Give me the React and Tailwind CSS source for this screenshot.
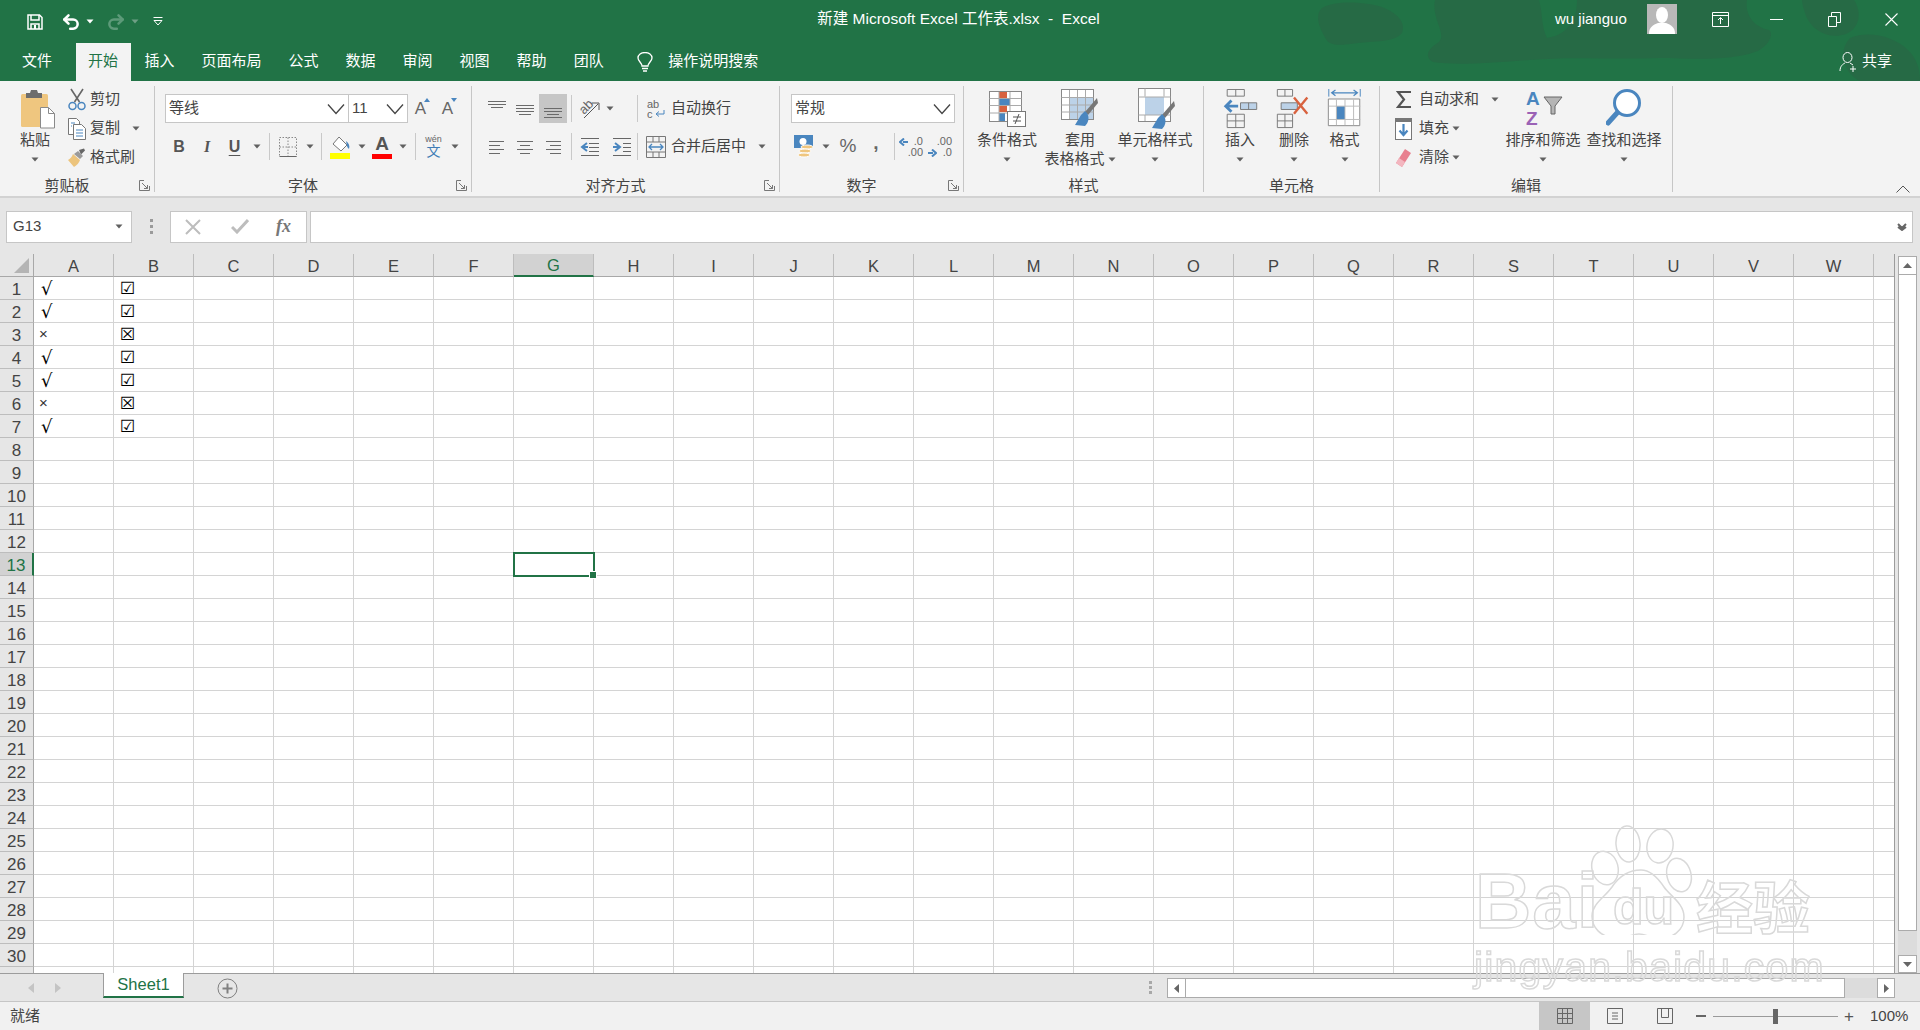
import { Undo2, Redo2 } from 'lucide-react'

const COLS = 'ABCDEFGHIJKLMNOPQRSTUVW'.split('')
const ROWS = Array.from({ length: 31 }, (_, i) => i + 1)
const MARKS = { 1: '√', 2: '√', 3: '×', 4: '√', 5: '√', 6: '×', 7: '√' }

function Caret({ className = '', color = '#606060' }) {
  return (
    <svg width="8" height="5" viewBox="0 0 8 5" className={`shrink-0 ${className}`}>
      <path d="M0.5 0.5h7L4 4.5z" fill={color} />
    </svg>
  )
}

function Chevron() {
  return (
    <svg width="18" height="12" viewBox="0 0 18 12" fill="none" stroke="#444" strokeWidth="1.3">
      <path d="M1 1.5l8 9 8-9" />
    </svg>
  )
}

function Launcher() {
  return (
    <svg width="11" height="11" viewBox="0 0 11 11" fill="none" stroke="#777" className="absolute right-[4px] bottom-[1px]">
      <path d="M5 .5H.5v10h10V6M3 3l5.5 5.5M8.5 5v3.5H5" />
    </svg>
  )
}

function Group({ className, label, launcher, children }) {
  return (
    <div className={`relative flex flex-col h-[106px] border-r border-[#c6c6c6] shrink-0 ${className}`}>
      <div className="flex h-[90px]">{children}</div>
      <div className={`h-[16px] leading-[20px] text-center text-[15px] text-[#444] ${launcher ? 'pr-[20px]' : ''}`}>{label}</div>
      {launcher && <Launcher />}
    </div>
  )
}

function Cell({ className, children }) {
  return <div className={`flex items-center justify-center h-full shrink-0 ${className}`}>{children}</div>
}

function Sep() {
  return <div className="w-px h-[27px] bg-[#c9c9c9] shrink-0" />
}

function Combo({ className, text }) {
  return (
    <div className={`flex items-center justify-between h-[29px] bg-white border border-[#c6c6c6] pl-[3px] pr-[3px] text-[15px] text-[#444] shrink-0 ${className}`}>
      <span>{text}</span>
      <Chevron />
    </div>
  )
}

function LargeBtn({ className, icon, iconClass = '', lines }) {
  return (
    <div className={`flex flex-col items-center pt-[2px] shrink-0 text-[15px] text-[#444] whitespace-nowrap ${className}`}>
      <div className={`h-[41px] flex items-center justify-center ${iconClass}`}>{icon}</div>
      <div className="leading-[20px] h-[20px] pt-[1px]">{lines[0]}</div>
      {lines[1] ? (
        <div className="leading-[20px] h-[20px] flex items-center gap-[3px]">
          {lines[1]}
          <Caret />
        </div>
      ) : (
        <div className="h-[20px] flex items-center"><Caret /></div>
      )}
    </div>
  )
}

/* ---- icons ---- */
const BLUE = '#4a86bf'
const LBLUE = '#bcd2e8'

const PasteIcon = (
  <svg width="36" height="40" viewBox="0 0 36 40">
    <rect x="0" y="5" width="27" height="33" rx="1.5" fill="#efc67f" />
    <path d="M5 4h4l1-3h6l1 3h4v5H5z" fill="#6d6d6d" />
    <path d="M19.5 18.5h8l6 6v14.500h-14z" fill="#fff" stroke="#8a8a8a" />
    <path d="M27.500 18.500v6h6" fill="none" stroke="#8a8a8a" />
  </svg>
)
const ScissorsIcon = (
  <svg width="18" height="23" viewBox="0 0 18 23" fill="none">
    <path d="M3 1l8.500 13M15 1L6.500 14" stroke="#666" strokeWidth="1.6" />
    <circle cx="4.500" cy="18" r="3.500" stroke={BLUE} strokeWidth="1.500" />
    <circle cx="13.500" cy="18" r="3.500" stroke={BLUE} strokeWidth="1.500" />
  </svg>
)
const CopyIcon = (
  <svg width="18" height="22" viewBox="0 0 18 22" fill="#fff" stroke="#777">
    <path d="M.5.500h8l3 3v13H.5z" />
    <path d="M5.500 6.500h8l4 4v11h-12z" />
    <path d="M3 5h4M3 8h1M8 12h7M8 15h7M8 18h7" stroke={BLUE} />
  </svg>
)
const BrushIcon = (
  <svg width="18" height="20" viewBox="0 0 18 20">
    <path d="M11 2l5-1.500 1 2-4 4z" fill="#666" />
    <path d="M10 3l5 5-3 3-6-5z" fill="#9a9a9a" />
    <path d="M5 6l7 6c-1 3-3 5-6 7L0 12c2-1 4-3 5-6z" fill="#ecc47d" />
  </svg>
)
const Bold = <span className="font-bold text-[16px] text-[#555]">B</span>
const Italic = <span className="italic font-bold text-[16px] text-[#555] font-['Liberation_Serif',serif]">I</span>
const Under = <span className="font-bold text-[16px] text-[#555] underline underline-offset-[3px]">U</span>
const BorderIcon = (
  <svg width="18" height="20" viewBox="0 0 18 20" fill="none" stroke="#888" strokeDasharray="1.500 1.500">
    <path d="M.5.500h17v19H.5zM9 .5v19M.5 10h17" />
    <path d="M.5 19.500h17" strokeDasharray="none" stroke="#666" />
  </svg>
)
const FillIcon = (
  <svg width="21" height="24" viewBox="0 0 21 24">
    <path d="M9 2l8 8-6 6-8-7z" fill="#fff" stroke="#777" />
    <path d="M16 6c3 2 4 5 3 8-1-1-2-2-2-3z" fill={BLUE} />
    <rect x="0" y="18" width="20" height="6" fill="#ffff00" />
  </svg>
)
const FontColorIcon = (
  <div className="flex flex-col items-center">
    <span className="text-[19px] leading-[20px] font-bold text-[#555] font-['Liberation_Sans',sans-serif]">A</span>
    <div className="w-[20px] h-[5px] bg-[#ff0000]" />
  </div>
)
const PhoneticIcon = (
  <div className="flex flex-col items-center leading-none">
    <span className="text-[9px] leading-[9px] text-[#666]">wén</span>
    <span className="text-[14px] leading-[14px] text-[#3f7cb5]">文</span>
  </div>
)
function GrowA({ shrink }) {
  return (
    <div className="relative text-[17px] leading-[20px] text-[#666] pr-[2px]">
      A
      <svg width="6" height="4" viewBox="0 0 6 4" className="absolute right-[-2px] top-[-1px]">
        <path d={shrink ? 'M0 0h6L3 4z' : 'M3 0l3 4H0z'} fill={BLUE} />
      </svg>
    </div>
  )
}
function Lines({ spec }) {
  return (
    <svg width="20" height="20" viewBox="0 0 20 20" stroke="#6a6a6a" strokeWidth="1">
      {spec.map((s, i) => <line key={i} x1={s[0]} x2={s[1]} y1={s[2] + 0.5} y2={s[2] + 0.5} />)}
    </svg>
  )
}
const AlignTop = <Lines spec={[[1, 19, 2], [1, 19, 5], [4, 16, 8]]} />
const AlignMid = <Lines spec={[[1, 19, 6], [1, 19, 9], [1, 19, 12], [4, 16, 15]]} />
const AlignBot = <Lines spec={[[1, 19, 9], [1, 19, 12], [4, 16, 15], [1, 19, 18]]} />
const AlignL = <Lines spec={[[2, 17, 4], [2, 13, 8], [2, 17, 12], [2, 13, 16]]} />
const AlignC = <Lines spec={[[2, 18, 4], [5, 15, 8], [2, 18, 12], [5, 15, 16]]} />
const AlignR = <Lines spec={[[3, 18, 4], [7, 18, 8], [3, 18, 12], [7, 18, 16]]} />
const OrientIcon = (
  <div className="relative w-[22px] h-[22px]">
    <span className="absolute left-0 top-[1px] -rotate-45 text-[13px] leading-[16px] text-[#666]">ab</span>
    <svg width="22" height="22" viewBox="0 0 22 22" className="absolute inset-0" fill="none" stroke="#555">
      <path d="M5 20L19 6M13 5h7v7" />
    </svg>
  </div>
)
const Outdent = (
  <svg width="20" height="20" viewBox="0 0 20 20" fill="none">
    <path d="M1 1.500h18M9 6.500h10M9 10.500h10M9 14.500h10M1 18.500h18" stroke="#666" />
    <path d="M7 6L2 10l5 4M2 10h6" stroke={BLUE} strokeWidth="2" />
  </svg>
)
const Indent = (
  <svg width="20" height="20" viewBox="0 0 20 20" fill="none">
    <path d="M1 1.500h18M11 6.500h8M11 10.500h8M11 14.500h8M1 18.500h18" stroke="#666" />
    <path d="M3 6l5 4-5 4M1 10h6" stroke={BLUE} strokeWidth="2" />
  </svg>
)
const WrapIcon = (
  <div className="relative w-[18px] h-[20px] text-[#666] text-[11px] leading-[10px] font-['Liberation_Sans',sans-serif]">
    <div>ab</div>
    <div>c</div>
    <svg width="10" height="8" viewBox="0 0 10 8" fill="none" stroke={BLUE} className="absolute right-0 bottom-[1px]">
      <path d="M9 0v4H2M4 1.500L1 4l3 2.500" />
    </svg>
  </div>
)
const MergeIcon = (
  <svg width="20" height="22" viewBox="0 0 20 22" fill="none" stroke="#777">
    <path d="M.5.500h19v21H.5zM.5 6h19M.5 16h19M7 .5V6M13 .5V6M7 16v5.500M13 16v5.500" />
    <path d="M3 11h14M6 8l-3 3 3 3M14 8l3 3-3 3" stroke={BLUE} strokeWidth="1.300" />
  </svg>
)
const CurrencyIcon = (
  <svg width="20" height="24" viewBox="0 0 20 24">
    <rect x="0" y="0" width="19" height="13" fill={BLUE} />
    <circle cx="9" cy="6.500" r="3.500" fill="#fff" />
    <ellipse cx="13" cy="12" rx="6" ry="2" fill="#efc67f" stroke="#fff" />
    <ellipse cx="11" cy="16" rx="6" ry="2" fill="#efc67f" stroke="#fff" />
    <ellipse cx="10" cy="20" rx="6" ry="2" fill="#efc67f" stroke="#fff" />
  </svg>
)
function DecIcon({ top, bottom, right }) {
  return (
    <div className="relative w-[24px] h-[22px] text-[11px] leading-[11px] text-[#666] text-right font-['Liberation_Sans',sans-serif]">
      <div>{top}</div>
      <div>{bottom}</div>
      <svg width="9" height="8" viewBox="0 0 9 8" className={`absolute ${right ? 'left-0 top-[13px]' : 'left-0 top-[2px]'}`}>
        <path d={right ? 'M0 4h5M4 .5L8 4 4 7.500' : 'M9 4H4M5 .5L1 4l4 3.500'} stroke={BLUE} strokeWidth="2" fill="none" />
      </svg>
    </div>
  )
}
const CondIcon = (
  <svg width="38" height="36" viewBox="0 0 38 36">
    <rect x=".5" y=".5" width="32" height="30" fill="#fff" stroke="#888" />
    <rect x="10" y="1" width="8" height="6" fill="#d8623f" />
    <rect x="10" y="7" width="11" height="7" fill={BLUE} />
    <rect x="10" y="15" width="8" height="6" fill="#d8623f" />
    <rect x="10" y="22" width="6" height="8" fill={BLUE} />
    <path d="M.5 7.500h32M.5 14.500h32M.5 22h32M10 1v29M21 1v29" stroke="#aaa" fill="none" />
    <rect x="18.500" y="20.500" width="18" height="15" fill="#fff" stroke="#777" />
    <path d="M24 26h8M24 30h8M30 23l-4 10" stroke="#555" fill="none" />
  </svg>
)
const TableIcon = (
  <svg width="38" height="40" viewBox="0 0 38 40">
    <rect x=".5" y=".5" width="32" height="30" fill="#fff" stroke="#888" />
    <rect x="8" y="9" width="24" height="21" fill={LBLUE} />
    <path d="M.5 8.500h32M.5 16h32M.5 23h32M8.500 1v29M16.500 1v29M24.500 1v29" stroke="#aaa" fill="none" />
    <path d="M36 9l1 5-10 12-3-3z" fill="#777" />
    <path d="M26 24l-2-2-4 4-6 10 10 1c3-3 5-8 2-13z" fill={BLUE} />
  </svg>
)
const CellStyleIcon = (
  <svg width="38" height="42" viewBox="0 0 38 42">
    <rect x=".5" y=".5" width="32" height="33" fill="#fff" stroke="#888" />
    <rect x="7" y="9" width="19" height="18" fill={LBLUE} />
    <path d="M7 .5v8M26 .5v8M.5 9h32M.5 27h32M7 27v6M26 27v6" stroke="#aaa" fill="none" />
    <path d="M36 13l1 5-10 12-3-3z" fill="#777" />
    <path d="M26 28l-2-2-4 4-6 10 10 1c3-3 5-8 2-13z" fill={BLUE} />
  </svg>
)
const InsertIcon = (
  <svg width="36" height="40" viewBox="0 0 36 42" fill="none" stroke="#777">
    <path d="M3.500.5h18v7h-18zM12.500.5v7M3.500 26.500h18v14h-18zM12.500 26.500v14M3.500 33.500h18" />
    <path d="M17.500 14.500h17v7h-17zM26 14.500v7" fill={LBLUE} />
    <path d="M15 18H3M8 12l-6 6 6 6" stroke={BLUE} strokeWidth="3" />
  </svg>
)
const DeleteIcon = (
  <svg width="36" height="40" viewBox="0 0 36 42" fill="none" stroke="#777">
    <path d="M.5.500h16v7H.5zM8.500.5v7M.5 26.500h16v14H.5zM8.500 26.500v14M.5 33.500h16" />
    <path d="M4.500 14.500h17v7h-17z" fill={LBLUE} />
    <path d="M18 9l14 17M32 9L18 26" stroke="#d8623f" strokeWidth="2.500" />
  </svg>
)
const FormatIcon = (
  <svg width="36" height="40" viewBox="0 0 36 42" fill="none">
    <path d="M1 0v8M34 0v8" stroke={BLUE} />
    <path d="M4 4h27M8 1L4 4l4 3M27 1l4 3-4 3" stroke={BLUE} strokeWidth="1.300" />
    <path d="M.5 10.500h33v28h-33z" fill="#fff" stroke="#888" />
    <rect x="9" y="18" width="9" height="14" fill={BLUE} />
    <path d="M9 11v27M18 11v27M27 11v27M1 18h33M1 32h33" stroke="#bbb" />
  </svg>
)
const SigmaIcon = (
  <svg width="16" height="19" viewBox="0 0 16 19" fill="none" stroke="#555" strokeWidth="2.200">
    <path d="M15 2H2l6 7.500L2 17h13" />
  </svg>
)
const DownFillIcon = (
  <svg width="17" height="22" viewBox="0 0 17 22" fill="none">
    <rect x=".5" y=".5" width="16" height="21" fill="#fff" stroke="#777" />
    <rect x="0" y="0" width="17" height="4" fill="#777" />
    <path d="M8.500 6v11M4.500 12.500l4 4.500 4-4.500" stroke={BLUE} strokeWidth="2.200" />
  </svg>
)
const EraserIcon = (
  <svg width="17" height="20" viewBox="0 0 17 20">
    <path d="M10 1l6 4-9 14-6-4z" fill="#e8808f" />
    <path d="M1 15l3-5 6 4-3 5z" fill="#f3b6bf" />
  </svg>
)
const SortIcon = (
  <div className="relative w-[36px] h-[40px] font-bold text-[19px] leading-[20px] font-['Liberation_Sans',sans-serif]">
    <div className="text-[#4a86bf] pl-[1px]">A</div>
    <div className="text-[#9a62b5] pl-[1px]">Z</div>
    <svg width="20" height="20" viewBox="0 0 20 20" className="absolute right-[-2px] top-[7px]">
      <path d="M1 1h18l-7 9v8H8v-8z" fill="#b5b5b5" stroke="#666" />
    </svg>
  </div>
)
const FindIcon = (
  <svg width="36" height="42" viewBox="0 0 36 42" fill="none">
    <circle cx="21" cy="15" r="12.500" stroke={BLUE} strokeWidth="3" fill="#fff" />
    <path d="M11 25L2 35" stroke={BLUE} strokeWidth="5" strokeLinecap="round" />
  </svg>
)

function SmallRow({ iconClass, icon, text, caretClass }) {
  return (
    <div className="flex items-center h-[29px] text-[15px] text-[#444] whitespace-nowrap">
      <div className={`flex items-center justify-center shrink-0 ${iconClass}`}>{icon}</div>
      <span>{text}</span>
      {caretClass && <Caret className={caretClass} />}
    </div>
  )
}

function TitleBlobs() {
  return (
    <svg width="620" height="81" viewBox="1300 0 620 81" fill="#266a45" className="absolute right-0 top-0 pointer-events-none">
      <path d="M1322 8c14-8 42-6 60-1 16 6 24 16 20 26-8 10-30 8-44 10-16 2-28 4-32-4-6-10-12-24-4-31z" />
      <path d="M1435 0h104c4 14 2 26 8 38 24-4 30-22 30-38h170c-2 12 4 26 22 30 6 4-2 18-14 22-30 10-66 6-96 6-50 2-84-2-130 2-30 2-72 6-96 2-10-6-4-14 6-20 8-8-8-24-4-42z" />
      <path d="M1802 0h52c8 12 6 28-8 34-18 6-34-4-40-18-2-6-4-12-4-16z" />
      <path d="M1850 38c18-8 44-2 58 12 8 8 12 18 12 31h-60c-14-6-24-28-10-43z" />
    </svg>
  )
}

function TitleBar() {
  return (
    <div className="relative flex items-center h-[43px] text-white">
      <TitleBlobs />
      <div className="relative flex items-center pl-[27px] w-[200px]">
        <svg width="16" height="16" viewBox="0 0 16 16" fill="none" stroke="#fff" strokeWidth="1.500">
          <path d="M1 1h11.500L15 3.500V15H1z" />
          <path d="M4 1v5h8V1M4 15v-5h8v5" />
          <path d="M8 11v4" strokeWidth="2" />
        </svg>
        <Undo2 size={20} strokeWidth={3} className="ml-[18px]" />
        <Caret className="ml-[5px]" color="#fff" />
        <Redo2 size={20} strokeWidth={3} color="#5d9a79" className="ml-[12px]" />
        <Caret className="ml-[5px]" color="#6f9f85" />
        <svg width="10" height="9" viewBox="0 0 10 9" fill="none" stroke="#fff" className="ml-[14px]">
          <path d="M.5.500h9M1 3.500h8L5 8z" />
        </svg>
      </div>
      <div className="relative flex-1 text-center text-[15.500px] pl-[162px] pb-[6px] whitespace-pre">新建 Microsoft Excel 工作表.xlsx  -  Excel</div>
      <div className="relative flex items-center w-[365px] shrink-0 pb-[5px] text-[15px]">
        <span className="w-[92px]">wu jianguo</span>
        <div className="flex items-end justify-center w-[30px] h-[30px] bg-[#b8b8b8] overflow-hidden">
          <svg width="26" height="28" viewBox="0 0 26 28" fill="#fff">
            <ellipse cx="13" cy="9" rx="6" ry="8" />
            <path d="M0 28c0-7 4-9 9-11h8c5 2 9 4 9 11z" />
          </svg>
        </div>
        <svg width="17" height="15" viewBox="0 0 17 15" fill="none" stroke="#fff" className="ml-[35px]">
          <path d="M.5.500h16v14H.5zM.5 3.500h16M8.500 12V6M6 8l2.500-2.500L11 8" />
        </svg>
        <div className="w-[13px] h-px bg-white ml-[41px]" />
        <svg width="13" height="15" viewBox="0 0 13 15" fill="none" stroke="#fff" className="ml-[45px]">
          <path d="M.5 4.500h8v10h-8zM3.500 4V.5h9v10H9" />
        </svg>
        <svg width="13" height="13" viewBox="0 0 13 13" stroke="#fff" strokeWidth="1.100" className="ml-[44px]">
          <path d="M.5.500l12 12M12.500.5l-12 12" />
        </svg>
      </div>
    </div>
  )
}

function TabRow() {
  const tabs = ['插入', '页面布局', '公式', '数据', '审阅', '视图', '帮助', '团队']
  return (
    <div className="relative flex items-stretch h-[38px] pl-[22px] text-white text-[15px] whitespace-nowrap">
      <div className="flex items-center mr-[24px] pb-[1px]">文件</div>
      <div className="flex items-center px-[12px] w-[55px] pb-[1px] bg-[#f3f3f3] text-[#217346]">开始</div>
      {tabs.map(t => (
        <div key={t} className="flex items-center px-[13px] mx-[0.5px] pb-[1px]">{t}</div>
      ))}
      <div className="flex items-center ml-[20px] pb-[1px]">
        <svg width="16" height="20" viewBox="0 0 16 20" fill="none" stroke="#fff" strokeWidth="1.300">
          <path d="M5 14c0-3-4-5-4-8a7 5.500 0 0 1 14 0c0 3-4 5-4 8z" />
          <path d="M5 16.500h6M6 19h4" />
        </svg>
        <span className="ml-[15px]">操作说明搜索</span>
      </div>
      <div className="relative ml-auto flex items-center pr-[28px] pb-[1px]">
        <svg width="19" height="20" viewBox="0 0 19 20" fill="none" stroke="#fff" className="mr-[4px]">
          <ellipse cx="8.500" cy="5.500" rx="4.500" ry="5" />
          <path d="M1 19c0-5 3-7 5-8M11 11l3 2M14 14v6M11 17h6" />
        </svg>
        共享
      </div>
    </div>
  )
}

function Ribbon() {
  return (
    <div className="relative flex items-start h-[117px] bg-[#f3f3f3] border-b-2 border-[#d2d2d2] pt-[5px]">
      <Group className="w-[155px]" label="剪贴板" launcher>
        <LargeBtn className="ml-[7px] w-[56px]" iconClass="pl-[8px]" icon={PasteIcon} lines={['粘贴']} />
        <div className="flex flex-col -mt-[1px]">
          <SmallRow iconClass="w-[27px]" icon={ScissorsIcon} text="剪切" />
          <SmallRow iconClass="w-[27px]" icon={CopyIcon} text="复制" caretClass="ml-[12px]" />
          <SmallRow iconClass="w-[27px]" icon={BrushIcon} text="格式刷" />
        </div>
      </Group>

      <Group className="w-[317px]" label="字体" launcher>
        <div className="flex flex-col pl-[10px] pt-[8px] gap-[9px]">
          <div className="flex h-[29px] items-center">
            <Combo className="w-[184px]" text="等线" />
            <Combo className="w-[60px] -ml-px" text="11" />
            <Cell className="w-[27px]"><GrowA /></Cell>
            <Cell className="w-[27px]"><GrowA shrink /></Cell>
          </div>
          <div className="flex h-[29px] items-center">
            <Cell className="w-[28px]">{Bold}</Cell>
            <Cell className="w-[28px]">{Italic}</Cell>
            <Cell className="w-[27px]">{Under}</Cell>
            <Cell className="w-[18px]"><Caret /></Cell>
            <Cell className="w-[3px]" />
            <Sep />
            <Cell className="w-[35px]">{BorderIcon}</Cell>
            <Cell className="w-[10px]"><Caret /></Cell>
            <Cell className="w-[6px]" />
            <Sep />
            <Cell className="w-[36px]">{FillIcon}</Cell>
            <Cell className="w-[8px]"><Caret /></Cell>
            <Cell className="w-[4px]" />
            <Cell className="w-[24px]">{FontColorIcon}</Cell>
            <Cell className="w-[18px]"><Caret /></Cell>
            <Cell className="w-[3px]" />
            <Sep />
            <Cell className="w-[35px]">{PhoneticIcon}</Cell>
            <Cell className="w-[8px]"><Caret /></Cell>
          </div>
        </div>
      </Group>

      <Group className="w-[308px]" label="对齐方式" launcher>
        <div className="flex flex-col pl-[11px] pt-[8px] gap-[9px] w-[165px] shrink-0">
          <div className="flex h-[29px] items-center">
            <Cell className="w-[28px]">{AlignTop}</Cell>
            <Cell className="w-[28px]">{AlignMid}</Cell>
            <Cell className="w-[28px] bg-[#c6c6c6]">{AlignBot}</Cell>
            <Cell className="w-[4px]" />
            <Sep />
            <Cell className="w-[36px]">{OrientIcon}</Cell>
            <Cell className="w-[3px]"><Caret /></Cell>
          </div>
          <div className="flex h-[29px] items-center">
            <Cell className="w-[28px]">{AlignL}</Cell>
            <Cell className="w-[28px]">{AlignC}</Cell>
            <Cell className="w-[28px]">{AlignR}</Cell>
            <Cell className="w-[4px]" />
            <Sep />
            <Cell className="w-[36px]">{Outdent}</Cell>
            <Cell className="w-[27px]">{Indent}</Cell>
          </div>
        </div>
        <div className="flex flex-col gap-[11px] pt-[9px] shrink-0">
          <Sep />
          <Sep />
        </div>
        <div className="flex flex-col gap-[9px] pt-[8px] h-[78px] shrink-0">
          <SmallRow iconClass="w-[33px] pl-[3px]" icon={WrapIcon} text="自动换行" />
          <SmallRow iconClass="w-[33px] pl-[3px]" icon={MergeIcon} text="合并后居中" caretClass="ml-[12px]" />
        </div>
      </Group>

      <Group className="w-[184px]" label="数字" launcher>
        <div className="flex flex-col pl-[11px] pt-[8px] gap-[9px]">
          <Combo className="w-[164px]" text="常规" />
          <div className="flex h-[29px] items-center">
            <Cell className="w-[26px]">{CurrencyIcon}</Cell>
            <Cell className="w-[18px]"><Caret /></Cell>
            <Cell className="w-[26px]"><span className="text-[19px] text-[#666]">%</span></Cell>
            <Cell className="w-[30px]"><span className="text-[19px] font-bold text-[#666] pb-[6px]">,</span></Cell>
            <Cell className="w-[3px]" />
            <Sep />
            <Cell className="w-[32px]"><DecIcon top=".0" bottom=".00" /></Cell>
            <Cell className="w-[26px]"><DecIcon top=".00" bottom=".0" right /></Cell>
          </div>
        </div>
      </Group>

      <Group className="w-[240px]" label="样式">
        <LargeBtn className="ml-[4px] w-[78px]" iconClass="pl-[2px]" icon={CondIcon} lines={['条件格式']} />
        <LargeBtn className="w-[68px]" icon={TableIcon} lines={['套用', '表格格式']} />
        <LargeBtn className="w-[82px]" iconClass="pl-[3px]" icon={CellStyleIcon} lines={['单元格样式']} />
      </Group>

      <Group className="w-[176px]" label="单元格">
        <LargeBtn className="w-[72px]" iconClass="pl-[2px]" icon={InsertIcon} lines={['插入']} />
        <LargeBtn className="w-[36px]" icon={DeleteIcon} lines={['删除']} />
        <LargeBtn className="w-[65px]" icon={FormatIcon} lines={['格式']} />
      </Group>

      <Group className="w-[293px]" label="编辑">
        <div className="flex flex-col w-[120px] shrink-0 -mt-[1px]">
          <SmallRow iconClass="w-[31px] ml-[8px]" icon={SigmaIcon} text="自动求和" caretClass="ml-[12px]" />
          <SmallRow iconClass="w-[31px] ml-[8px]" icon={DownFillIcon} text="填充" caretClass="ml-[3px]" />
          <SmallRow iconClass="w-[31px] ml-[8px]" icon={EraserIcon} text="清除" caretClass="ml-[3px]" />
        </div>
        <LargeBtn className="w-[86px]" icon={SortIcon} lines={['排序和筛选']} />
        <LargeBtn className="w-[76px]" icon={FindIcon} lines={['查找和选择']} />
      </Group>

      <svg width="14" height="8" viewBox="0 0 14 8" fill="none" stroke="#555" className="absolute right-[10px] bottom-[3px]">
        <path d="M.5 7.500L7 1l6.500 6.500" />
      </svg>
    </div>
  )
}

function FormulaBar() {
  return (
    <div className="flex items-center h-[56px] bg-[#e6e6e6] pl-[6px] pr-[7px] pt-[1px] shrink-0">
      <div className="flex items-center justify-between w-[126px] h-[32px] bg-white border border-[#c6c6c6] pl-[6px] pr-[8px] text-[15px] text-[#444]">
        G13
        <Caret />
      </div>
      <div className="flex flex-col gap-[3px] w-[38px] items-center">
        <div className="w-[3px] h-[3px] bg-[#9a9a9a]" />
        <div className="w-[3px] h-[3px] bg-[#9a9a9a]" />
        <div className="w-[3px] h-[3px] bg-[#9a9a9a]" />
      </div>
      <div className="flex items-center w-[137px] h-[32px] bg-white border border-[#c6c6c6] shrink-0">
        <svg width="16" height="16" viewBox="0 0 16 16" stroke="#bdbdbd" strokeWidth="2" className="ml-[14px]">
          <path d="M1 1l14 14M15 1L1 15" />
        </svg>
        <svg width="18" height="15" viewBox="0 0 18 15" fill="none" stroke="#bdbdbd" strokeWidth="3" className="ml-[30px]">
          <path d="M1 8l5 5L17 1" />
        </svg>
        <span className="ml-[27px] italic font-bold text-[18px] text-[#777] font-['Liberation_Serif',serif]">fx</span>
      </div>
      <div className="flex items-center justify-end flex-1 h-[32px] ml-[3px] bg-white border border-[#c6c6c6] pr-[5px]">
        <svg width="10" height="8" viewBox="0 0 10 8" fill="none" stroke="#666" strokeWidth="2">
          <path d="M1 1l4 4 4-4M1 4l4 3 4-3" />
        </svg>
      </div>
    </div>
  )
}

function Watermark() {
  const outline = 'text-transparent [-webkit-text-stroke:1.5px_#d9d9d9] blur-[0.4px]'
  return (
    <div className="absolute left-[1470px] top-[825px] w-[350px] h-[175px] pointer-events-none font-['Liberation_Sans',sans-serif] z-10">
      <svg width="350" height="110" viewBox="0 0 350 110" fill="none" stroke="#d9d9d9" strokeWidth="1.500" className="absolute left-0 top-0 blur-[0.4px]">
        <ellipse cx="158" cy="19" rx="12" ry="18" transform="rotate(-5 158 19)" />
        <ellipse cx="190" cy="21" rx="13" ry="17" transform="rotate(10 190 21)" />
        <ellipse cx="135" cy="43" rx="13" ry="17" transform="rotate(-15 135 43)" />
        <ellipse cx="209" cy="50" rx="12" ry="17" transform="rotate(-15 209 50)" />
        <path d="M171 45c10 0 17 8 23 17 6 9 20 16 20 30 0 14-12 22-26 21-8 0-12-4-19-4-8 0-13 5-24 4-14-1-23-10-23-22 0-12 13-19 20-29 6-9 16-17 29-17z" />
      </svg>
      <span className={`absolute left-[5px] top-[37px] text-[78px] leading-[78px] font-bold tracking-[1px] ${outline}`}>Bai</span>
      <span className={`absolute left-[143px] top-[57px] text-[50px] leading-[50px] font-bold ${outline}`}>du</span>
      <span className={`absolute left-[226px] top-[46px] text-[57px] leading-[66px] font-bold font-['Noto_Sans_CJK_SC',sans-serif] ${outline}`}>经验</span>
      <span className={`absolute left-[4px] top-[117px] text-[41px] leading-[50px] tracking-[1.200px] ${outline}`}>jingyan.baidu.com</span>
    </div>
  )
}

function Sheet() {
  return (
    <div className="flex flex-1 min-h-0 bg-[#e6e6e6] font-['Liberation_Sans',sans-serif]">
      <div className="w-[1895px] shrink-0 border-r border-[#9c9c9c] overflow-hidden flex flex-col">
        <div className="flex h-[23px] shrink-0 w-[1954px]">
          <div className="relative w-[34px] shrink-0 border-b border-r border-[#a8a8a8]">
            <svg width="16" height="15" viewBox="0 0 16 15" className="absolute right-[3px] bottom-[3px]">
              <path d="M15 0v15H0z" fill="#b4b4b4" />
            </svg>
          </div>
          {COLS.map(c => (
            <div key={c} className={`flex items-center justify-center w-[80px] shrink-0 pt-[2px] text-[16.500px] border-r border-[#bdbdbd] ${c === 'G' ? 'bg-[#d2d2d2] text-[#217346] border-b-2 border-b-[#217346]' : 'text-[#444] border-b border-b-[#a8a8a8]'}`}>
              {c}
            </div>
          ))}
          <div className="w-[80px] shrink-0 border-b border-[#a8a8a8]" />
        </div>
        {ROWS.map(r => (
          <div key={r} className="flex h-[23px] shrink-0 w-[1954px] bg-white">
            <div className={`flex items-center justify-center w-[34px] shrink-0 pt-[3px] text-[17px] border-r border-b border-b-[#bdbdbd] ${r === 13 ? 'bg-[#d2d2d2] text-[#217346] border-r-2 border-r-[#217346]' : 'bg-[#e6e6e6] text-[#444] border-r-[#a8a8a8]'}`}>
              {r < 31 ? r : ''}
            </div>
            {[...COLS, ''].map((c, i) => (
              <div key={i} className="relative flex items-center w-[80px] shrink-0 border-r border-b border-[#d4d4d4] text-black">
                {i === 0 && MARKS[r] && (
                  <span className={MARKS[r] === '√' ? 'pl-[7px] pt-[1px] text-[18px] font-["DejaVu_Sans",sans-serif]' : 'pl-[5px] pt-[1px] text-[15px] text-[#333]'}>{MARKS[r]}</span>
                )}
                {i === 1 && MARKS[r] && (
                  <span className="pl-[6px] pt-[1px] text-[17px] font-['DejaVu_Sans',sans-serif]">{MARKS[r] === '√' ? '☑' : '☒'}</span>
                )}
                {c === 'G' && r === 13 && (
                  <div className="absolute -left-[1px] -top-[1px] w-[82px] h-[25px] border-2 border-[#217346] z-10">
                    <div className="absolute -right-[3px] -bottom-[3px] w-[6px] h-[6px] bg-[#217346] border border-white box-content -mr-px -mb-px" />
                  </div>
                )}
              </div>
            ))}
          </div>
        ))}
      </div>
      <div className="flex flex-col w-[25px] pl-[3px] pt-[2px] shrink-0">
        <div className="flex items-center justify-center w-[19px] h-[19px] bg-white border border-[#ababab]">
          <svg width="9" height="5" viewBox="0 0 9 5"><path d="M4.500 0L9 5H0z" fill="#666" /></svg>
        </div>
        <div className="w-[19px] h-[656px] bg-white border-x border-b border-[#ababab]" />
        <div className="w-[19px] flex-1 bg-[#dcdcdc]" />
        <div className="flex items-center justify-center w-[19px] h-[18px] bg-white border border-[#ababab]">
          <svg width="9" height="5" viewBox="0 0 9 5"><path d="M4.500 5L9 0H0z" fill="#666" /></svg>
        </div>
      </div>
    </div>
  )
}

function SheetTabs() {
  return (
    <div className="flex items-start h-[29px] shrink-0 bg-[#e6e6e6] border-t border-[#9c9c9c] border-b border-b-[#c6c6c6] font-['Liberation_Sans',sans-serif]">
      <div className="flex items-center gap-[21px] pl-[28px] w-[103px] h-full shrink-0">
        <svg width="6" height="10" viewBox="0 0 6 10"><path d="M6 0v10L0 5z" fill="#c4c4c4" /></svg>
        <svg width="6" height="10" viewBox="0 0 6 10"><path d="M0 0v10l6-5z" fill="#c4c4c4" /></svg>
      </div>
      <div className="flex items-center justify-center w-[81px] h-[25px] -mt-px bg-white border-x border-[#9c9c9c] border-b-2 border-b-[#217346] text-[#217346] text-[16.500px] shrink-0">Sheet1</div>
      <svg width="21" height="21" viewBox="0 0 21 21" fill="none" stroke="#808080" className="ml-[33px] mt-[4px]">
        <circle cx="10.500" cy="10.500" r="9.500" />
        <path d="M5.500 10.500h10M10.500 5.500v10" strokeWidth="2" />
      </svg>
      <div className="flex flex-col gap-[2px] ml-[911px] mt-[7px] w-[3px]">
        <div className="w-[3px] h-[3px] bg-[#a8a8a8]" />
        <div className="w-[3px] h-[3px] bg-[#a8a8a8]" />
        <div className="w-[3px] h-[3px] bg-[#a8a8a8]" />
      </div>
      <div className="flex h-[20px] w-[728px] ml-[15px] mt-[4px] shrink-0">
        <div className="flex items-center justify-center w-[19px] bg-white border border-[#ababab]">
          <svg width="5" height="9" viewBox="0 0 5 9"><path d="M5 0v9L0 4.500z" fill="#666" /></svg>
        </div>
        <div className="w-[659px] bg-white border-y border-r border-[#ababab]" />
        <div className="flex-1 bg-[#dcdcdc]" />
        <div className="flex items-center justify-center w-[18px] bg-white border border-[#ababab]">
          <svg width="5" height="9" viewBox="0 0 5 9"><path d="M0 0v9l5-4.500z" fill="#666" /></svg>
        </div>
      </div>
    </div>
  )
}

function StatusBar() {
  return (
    <div className="flex items-center h-[28px] shrink-0 bg-[#f1f1f1] pl-[10px] text-[15px] text-[#444]">
      <span>就绪</span>
      <div className="ml-auto flex items-center h-full pr-[10px]">
        <div className="flex items-center justify-center w-[51px] h-full bg-[#c6c6c6]">
          <svg width="16" height="16" viewBox="0 0 16 16" fill="none" stroke="#666">
            <path d="M.5.500h15v15H.5zM5.500.5v15M10.500.5v15M.5 5.500h15M.5 10.500h15" />
          </svg>
        </div>
        <div className="flex items-center justify-center w-[50px]">
          <svg width="16" height="16" viewBox="0 0 16 16" fill="none" stroke="#666">
            <path d="M.5.500h15v15H.5zM5 5h6M5 8h6M5 11h6" />
          </svg>
        </div>
        <div className="flex items-center justify-center w-[50px]">
          <svg width="16" height="16" viewBox="0 0 16 16" fill="none" stroke="#666">
            <path d="M.5.500h15v15H.5zM4.500.5v9h7v-9" />
          </svg>
        </div>
        <div className="w-[10px] h-[2px] bg-[#666] ml-[6px]" />
        <div className="relative w-[125px] h-px bg-[#9a9a9a] ml-[7px]">
          <div className="absolute left-[60px] -top-[7px] w-[5px] h-[15px] bg-[#666]" />
        </div>
        <span className="ml-[6px] text-[17px] leading-none text-[#555]">+</span>
        <span className="ml-[16px] w-[40px] text-[15px] font-['Liberation_Sans',sans-serif]">100%</span>
      </div>
    </div>
  )
}

export default function App() {
  return (
    <div className="relative flex flex-col w-[1920px] h-[1030px] overflow-hidden bg-[#217346] font-['Liberation_Sans','Noto_Sans_CJK_SC',sans-serif]">
      <TitleBar />
      <TabRow />
      <Ribbon />
      <FormulaBar />
      <Sheet />
      <SheetTabs />
      <StatusBar />
      <Watermark />
    </div>
  )
}
